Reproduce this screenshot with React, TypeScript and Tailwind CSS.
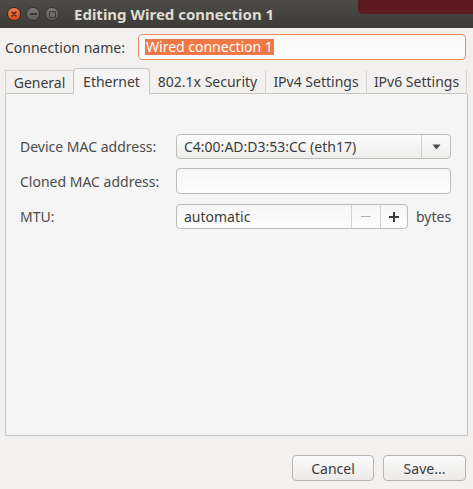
import React from "react";

const font = { fontFamily: '"Noto Sans", "DejaVu Sans", sans-serif' };

export default function App() {
  return (
    <div className="w-[473px] h-[489px] bg-[#f2f1f0] text-[14px] text-[#3c3c3c] flex flex-col overflow-hidden" style={font}>
      {/* title bar */}
      <div className="relative h-[28px] shrink-0 bg-gradient-to-b from-[#4d4c47] to-[#3c3b37] flex items-center">
        <div className="flex items-center gap-[5px] pl-[7px]">
          <div className="w-[14px] h-[14px] rounded-full bg-gradient-to-b from-[#f37f52] to-[#df4a16] border border-[#3a2a20] flex items-center justify-center">
            <svg width="8" height="8" viewBox="0 0 8 8"><path d="M2 2 L6 6 M6 2 L2 6" stroke="#3b2218" strokeWidth="1.4" strokeLinecap="round" /></svg>
          </div>
          <div className="w-[14px] h-[14px] rounded-full bg-gradient-to-b from-[#7d7c77] to-[#5d5c57] border border-[#34332f] flex items-center justify-center">
            <div className="w-[7px] h-[2px] bg-[#3a3935]" />
          </div>
          <div className="w-[14px] h-[14px] rounded-full bg-gradient-to-b from-[#7d7c77] to-[#5d5c57] border border-[#34332f] flex items-center justify-center">
            <div className="w-[7px] h-[7px] border-[1.5px] border-[#3a3935] rounded-[1px]" />
          </div>
        </div>
        <div className="ml-[15px] font-bold text-[#dfdbd2] text-[15px] leading-none">Editing Wired connection 1</div>
        <div className="absolute right-0 top-0 w-[115px] h-[14px] bg-[#5e1a1f] rounded-bl-[5px]" />
      </div>

      {/* connection name */}
      <div className="flex items-center mt-[6px] pl-[5px] pr-[7px] h-[26px]">
        <div className="w-[133px]">Connection name:</div>
        <div className="flex-1 h-[26px] rounded-[4px] border border-[#ee8b62] bg-gradient-to-b from-[#f8f8f7] to-[#fdfdfd] flex items-center pl-[6px]">
          <span className="bg-[#f07746] text-white leading-[16px] px-px">Wired connection 1</span>
        </div>
      </div>

      {/* tabs */}
      <div className="mt-[8px] mx-[5px] flex items-end h-[26px]">
        <div className="h-[24px] w-[68px] border-l border-t border-[#d6d4d1] flex items-center justify-center border-b border-b-[#c8c6c3]">General</div>
        <div className="h-[26px] w-[77px] border border-b-0 border-[#c8c6c3] rounded-t-[4px] bg-[#f5f5f5] flex items-center justify-center">Ethernet</div>
        <div className="h-[24px] w-[116px] border-r border-[#d6d4d1] flex items-center justify-center border-b border-b-[#c8c6c3]">802.1x Security</div>
        <div className="h-[24px] w-[101px] border-r border-[#d6d4d1] flex items-center justify-center border-b border-b-[#c8c6c3]">IPv4 Settings</div>
        <div className="h-[24px] w-[100px] flex items-center justify-center border-b border-b-[#c8c6c3] border-r border-r-[#d6d4d1]">IPv6 Settings</div>
      </div>

      {/* panel */}
      <div className="mx-[5px] h-[342px] bg-[#f5f5f5] border border-t-0 border-[#c8c6c3] rounded-b-[2px] pl-[14px] pr-[15px] pt-[40px] flex flex-col text-[#4c4c4c]">
        <div className="flex items-center h-[25px]">
          <div className="w-[156px]">Device MAC address:</div>
          <div className="w-[275px] h-[25px] rounded-[4px] border border-[#bebcb9] bg-gradient-to-b from-[#fcfcfc] to-[#efeeed] flex items-center">
            <div className="flex-1 pl-[7px] text-[#3c3c3c]">C4:00:AD:D3:53:CC (eth17)</div>
            <div className="w-[29px] h-full border-l border-[#d0cecb] flex items-center justify-center">
              <svg width="9" height="6" viewBox="0 0 9 6"><path d="M0.5 0.5 L8.5 0.5 L4.5 5.5 Z" fill="#4c4c4c" /></svg>
            </div>
          </div>
        </div>
        <div className="flex items-center h-[26px] mt-[9px]">
          <div className="w-[156px]">Cloned MAC address:</div>
          <div className="w-[275px] h-[26px] rounded-[4px] border border-[#bebcb9] bg-gradient-to-b from-[#f6f6f6] to-[#fdfdfd]" />
        </div>
        <div className="flex items-center h-[25px] mt-[10px]">
          <div className="w-[156px]">MTU:</div>
          <div className="w-[232px] h-[25px] rounded-[4px] border border-[#bebcb9] bg-gradient-to-b from-[#f6f6f6] to-[#fdfdfd] flex items-center">
            <div className="flex-1 pl-[7px] text-[#3c3c3c]">automatic</div>
            <div className="w-[29px] h-full border-l border-[#d6d4d1] flex items-center justify-center">
              <div className="w-[10px] h-[1.5px] bg-[#b0aeab]" />
            </div>
            <div className="w-[27px] h-full border-l border-[#d6d4d1] flex items-center justify-center relative">
              <div className="w-[10px] h-[2px] bg-[#3c3c3c]" />
              <div className="absolute w-[2px] h-[10px] bg-[#3c3c3c]" />
            </div>
          </div>
          <div className="ml-[8px] text-[#4c4c4c]">bytes</div>
        </div>
      </div>

      {/* buttons */}
      <div className="flex justify-end gap-[9px] pr-[7px] mt-[19px]">
        <div className="w-[82px] h-[26px] rounded-[4px] border border-[#b8b6b3] bg-gradient-to-b from-[#fbfbfb] to-[#eceae8] flex items-center justify-center">Cancel</div>
        <div className="w-[83px] h-[26px] rounded-[4px] border border-[#b8b6b3] bg-gradient-to-b from-[#fbfbfb] to-[#eceae8] flex items-center justify-center">Save...</div>
      </div>
    </div>
  );
}
